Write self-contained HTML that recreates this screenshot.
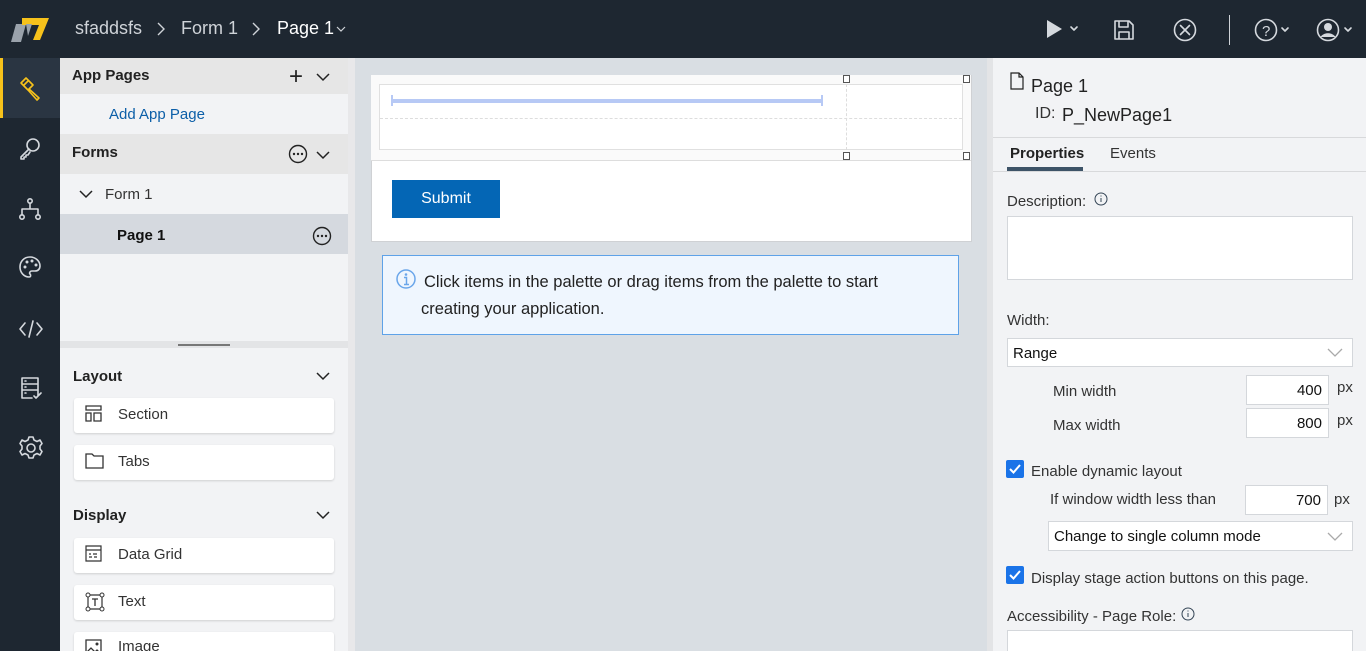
<!DOCTYPE html>
<html><head><meta charset="utf-8"><style>
*{box-sizing:border-box;margin:0;padding:0}
html,body{width:1366px;height:651px;overflow:hidden}
body{font-family:"Liberation Sans",Roboto,sans-serif;background:#d9dee3;color:#222}
#w{position:relative;width:1366px;height:651px;overflow:hidden}
.a{position:absolute}
.top{left:0;top:0;width:1366px;height:58px;background:#1e2731}
.rail{left:0;top:58px;width:60px;height:593px;background:#1e2731}
.ic{stroke:#d5d9de;fill:none;stroke-width:1.6;stroke-linecap:round;stroke-linejoin:round}
.lp{left:60px;top:58px;width:288px;height:593px;background:#f2f3f5}
.hd{background:#e6e6e6;font-weight:bold;font-size:15px;color:#222}
.card{left:74px;width:260px;height:35px;background:#fff;border-radius:3px;box-shadow:0 1px 2px rgba(0,0,0,.15);font-size:15px;color:#333}
.card span{position:absolute;left:44px;top:8px}
.card svg{position:absolute;left:11px;top:7px}
.rp{left:993px;top:58px;width:373px;height:593px;background:#f2f3f5;overflow:hidden}
.lbl{font-size:15px;color:#333}
.inp{background:#fff;border:1px solid #d4d7db}
.chk{width:18px;height:18px;background:#1a73e8;border-radius:2px}
</style></head><body><div id="w">
<div class="a top">
 <svg class="a" style="left:10px;top:16px" width="40" height="26"><polygon points="6,8 16,8 11,26 1,26" fill="#9aa2ab"/><polygon points="12,2 39,2 30,24 23,24 29,9 12,9" fill="#f7c21b"/><polygon points="16,8 22,8 18,20" fill="#9aa2ab"/></svg>
 <div class="a" style="left:75px;top:18px;font-size:18px;color:#cfd3d8">sfaddsfs</div>
 <svg class="a" style="left:156px;top:22px" width="10" height="14"><path d="M2 1l6 6-6 6" stroke="#cfd3d8" fill="none" stroke-width="1.4"/></svg>
 <div class="a" style="left:181px;top:18px;font-size:18px;color:#cfd3d8">Form 1</div>
 <svg class="a" style="left:251px;top:22px" width="10" height="14"><path d="M2 1l6 6-6 6" stroke="#cfd3d8" fill="none" stroke-width="1.4"/></svg>
 <div class="a" style="left:277px;top:18px;font-size:18px;color:#fff">Page 1</div>
 <svg class="a" style="left:336px;top:25px" width="10" height="8"><path d="M1 2l4 4 4-4" stroke="#cfd3d8" fill="none" stroke-width="1.2"/></svg>
 <svg class="a" style="left:1044px;top:18px" width="36" height="24"><polygon points="3,2 18,11 3,20" fill="#d5d9de"/><path class="ic" d="M27 9l3 3 3-3" stroke-width="1"/></svg>
 <svg class="a" style="left:1112px;top:18px" width="24" height="24"><path class="ic" d="M3 3h14l4 4v14H3z M7 3v6h9V3 M7 21v-7h10v7"/></svg>
 <svg class="a" style="left:1172px;top:17px" width="26" height="26"><circle class="ic" cx="13" cy="13" r="10.5"/><path class="ic" d="M8.5 8.5l9 9M17.5 8.5l-9 9"/></svg>
 <div class="a" style="left:1229px;top:15px;width:1px;height:30px;background:#cfd3d8"></div>
 <svg class="a" style="left:1254px;top:17px" width="40" height="26"><circle class="ic" cx="12" cy="13" r="10.5"/><text x="8" y="19" fill="#d5d9de" font-size="15" font-family="Liberation Sans">?</text><path class="ic" d="M28 11l3 3 3-3" stroke-width="1"/></svg>
 <svg class="a" style="left:1316px;top:17px" width="44" height="26"><circle class="ic" cx="12" cy="13" r="10.5"/><circle cx="12" cy="10" r="4" fill="#d5d9de"/><path d="M4.5 20c3-5 12-5 15 0" fill="#d5d9de"/><path class="ic" d="M29 11l3 3 3-3" stroke-width="1"/></svg>
</div>
<div class="a rail">
 <div class="a" style="left:0;top:0;width:60px;height:60px;background:#2a3542;border-left:3px solid #f7c21b"></div>
 <svg class="a" style="left:18px;top:18px" width="26" height="26"><path d="M3 7l5-5 7 7-5 5z M6 9l5-5 M11 13l10 9-2 2-9-10" stroke="#f7c21b" fill="none" stroke-width="1.6" stroke-linejoin="round"/></svg>
 <svg class="a" style="left:18px;top:78px" width="26" height="26"><circle class="ic" cx="15" cy="9" r="6"/><path class="ic" d="M11 13L3 21v2h3v-2h2v-2h2l2-3"/></svg>
 <svg class="a" style="left:18px;top:138px" width="26" height="26"><circle class="ic" cx="12" cy="5" r="2.2"/><circle class="ic" cx="4" cy="21" r="2.2"/><circle class="ic" cx="20" cy="21" r="2.2"/><path class="ic" d="M12 7v6M4 19v-6h16v6"/></svg>
 <svg class="a" style="left:18px;top:197px" width="26" height="26"><path class="ic" d="M12 2C6 2 2 6.5 2 12s4 10 9 10c2 0 2-2 1-3s0-3 2-3h3c3 0 5-2 5-5 0-5-4.5-9-10-9z"/><circle cx="7" cy="12" r="1.5" fill="#d5d9de"/><circle cx="9" cy="7" r="1.5" fill="#d5d9de"/><circle cx="14" cy="6" r="1.5" fill="#d5d9de"/><circle cx="18" cy="10" r="1.5" fill="#d5d9de"/></svg>
 <svg class="a" style="left:18px;top:258px" width="26" height="26"><path class="ic" d="M7 7l-5 6 5 6M19 7l5 6-5 6M15 5l-4 16"/></svg>
 <svg class="a" style="left:20px;top:318px" width="24" height="26"><path class="ic" d="M2 2h16v18M2 2v20h10M2 8h16M2 14h16M5 5h1M5 11h1M5 17h1M14 20l2 2 5-5"/></svg>
 <svg class="a" style="left:18px;top:377px" width="26" height="26"><circle class="ic" cx="13" cy="13" r="4"/><path class="ic" d="M11 2h4l1 3 3 1.5 3-1.5 2 3.5-2 2.5v3l2 2.5-2 3.5-3-1.5-3 1.5-1 3h-4l-1-3-3-1.5-3 1.5-2-3.5 2-2.5v-3l-2-2.5 2-3.5 3 1.5 3-1.5z"/></svg>
</div>
<div class="a lp">
 <div class="a hd" style="left:0;top:0;width:288px;height:36px;padding:9px 12px">App Pages</div>
 <div class="a" style="left:229px;top:5px;font-size:24px;color:#222">+</div>
 <svg class="a" style="left:256px;top:14px" width="14" height="10"><path d="M1 2l6 6 6-6" stroke="#222" fill="none" stroke-width="1.5"/></svg>
 <div class="a" style="left:49px;top:48px;font-size:15px;color:#0c5fa8">Add App Page</div>
 <div class="a hd" style="left:0;top:76px;width:288px;height:40px;padding:10px 12px">Forms</div>
 <svg class="a" style="left:228px;top:86px" width="20" height="20"><circle cx="10" cy="10" r="8.5" stroke="#222" fill="none" stroke-width="1.4"/><circle cx="6" cy="10" r="1.2" fill="#222"/><circle cx="10" cy="10" r="1.2" fill="#222"/><circle cx="14" cy="10" r="1.2" fill="#222"/></svg>
 <svg class="a" style="left:256px;top:92px" width="14" height="10"><path d="M1 2l6 6 6-6" stroke="#222" fill="none" stroke-width="1.5"/></svg>
 <svg class="a" style="left:19px;top:131px" width="14" height="10"><path d="M1 2l6 6 6-6" stroke="#222" fill="none" stroke-width="1.5"/></svg>
 <div class="a" style="left:45px;top:128px;font-size:15px;color:#333">Form 1</div>
 <div class="a" style="left:0;top:156px;width:288px;height:40px;background:#d5d9df"></div>
 <div class="a" style="left:57px;top:169px;font-size:15px;font-weight:bold;color:#111">Page 1</div>
 <svg class="a" style="left:252px;top:168px" width="20" height="20"><circle cx="10" cy="10" r="8.5" stroke="#222" fill="none" stroke-width="1.4"/><circle cx="6" cy="10" r="1.2" fill="#222"/><circle cx="10" cy="10" r="1.2" fill="#222"/><circle cx="14" cy="10" r="1.2" fill="#222"/></svg>
 <div class="a" style="left:0;top:283px;width:288px;height:7px;background:#e3e4e6"></div>
 <div class="a" style="left:118px;top:286px;width:52px;height:2px;background:#777"></div>
 <div class="a" style="left:13px;top:310px;font-size:15px;font-weight:bold">Layout</div>
 <svg class="a" style="left:256px;top:313px" width="14" height="10"><path d="M1 2l6 6 6-6" stroke="#222" fill="none" stroke-width="1.5"/></svg>
 <div class="a" style="left:13px;top:449px;font-size:15px;font-weight:bold">Display</div>
 <svg class="a" style="left:256px;top:452px" width="14" height="10"><path d="M1 2l6 6 6-6" stroke="#222" fill="none" stroke-width="1.5"/></svg>
</div>
<div class="a card" style="top:398px"><svg width="18" height="18"><path d="M1 1h15v4H1zM1 8h5v8H1zM9 8h7v8H9z" stroke="#333" fill="none" stroke-width="1.3"/></svg><span>Section</span></div>
<div class="a card" style="top:445px"><svg width="20" height="18"><path d="M1 2h6l2 2h9v12H1z" stroke="#333" fill="none" stroke-width="1.3"/></svg><span>Tabs</span></div>
<div class="a card" style="top:538px"><svg width="18" height="18"><path d="M1 1h15v15H1zM1 5h15M4 9h2M8 9h4M4 12h3M9 12h3" stroke="#333" fill="none" stroke-width="1.2"/></svg><span>Data Grid</span></div>
<div class="a card" style="top:585px"><svg width="20" height="20"><path d="M3 3h14v14H3z" stroke="#333" fill="none" stroke-width="1.2"/><circle cx="3" cy="3" r="2" fill="#fff" stroke="#333"/><circle cx="17" cy="3" r="2" fill="#fff" stroke="#333"/><circle cx="3" cy="17" r="2" fill="#fff" stroke="#333"/><circle cx="17" cy="17" r="2" fill="#fff" stroke="#333"/><path d="M7 7h6M10 7v7" stroke="#333" stroke-width="1.3"/></svg><span>Text</span></div>
<div class="a card" style="top:632px"><svg width="18" height="18"><path d="M1 1h15v15H1zM1 14l5-5 4 4 2-2 4 4" stroke="#333" fill="none" stroke-width="1.3"/><circle cx="12" cy="5" r="1.5" fill="#333"/></svg><span style="top:6px">Image</span></div>
<div class="a" style="left:348px;top:58px;width:7px;height:593px;background:#e8e8ea"></div>
<!-- canvas -->
<div class="a" style="left:371px;top:75px;width:601px;height:167px;background:#fff;border:1px solid #cfd1d4"></div>
<div class="a" style="left:371px;top:75px;width:600px;height:86px;background:#fafafa;border-bottom:1px solid #ddd"></div>
<div class="a" style="left:379px;top:84px;width:584px;height:66px;background:#fff;border:1px solid #e0e0e0"></div>
<div class="a" style="left:380px;top:118px;width:582px;border-top:1px dashed #ddd"></div>
<div class="a" style="left:846px;top:84px;height:66px;border-left:1px dashed #ddd"></div>
<div class="a" style="left:392px;top:99px;width:431px;height:4px;background:#b7c9f5"></div>
<div class="a" style="left:391px;top:95px;width:2px;height:11px;background:#b7c9f5"></div>
<div class="a" style="left:821px;top:95px;width:2px;height:11px;background:#b7c9f5"></div>
<div class="a" style="left:843px;top:75px;width:7px;height:8px;border:1px solid #555;background:#fff"></div>
<div class="a" style="left:963px;top:75px;width:7px;height:8px;border:1px solid #555;background:#fff"></div>
<div class="a" style="left:843px;top:152px;width:7px;height:8px;border:1px solid #555;background:#fff"></div>
<div class="a" style="left:963px;top:152px;width:7px;height:8px;border:1px solid #555;background:#fff"></div>
<div class="a" style="left:392px;top:180px;width:108px;height:38px;background:#0466b5;color:#fff;font-size:16px;text-align:center;line-height:38px">Submit</div>
<div class="a" style="left:382px;top:255px;width:577px;height:80px;background:#eff6fe;border:1px solid #5ea2e8"></div>
<svg class="a" style="left:395px;top:268px" width="22" height="22"><circle cx="11" cy="11" r="9" stroke="#6aa6ea" fill="none" stroke-width="1.5"/><circle cx="11" cy="6.5" r="1.3" fill="#6aa6ea"/><path d="M9 9.5h2.5v7M9 16.5h5" stroke="#6aa6ea" stroke-width="1.5" fill="none"/></svg>
<div class="a" style="left:424px;top:273px;font-size:16.5px;color:#222">Click items in the palette or drag items from the palette to start</div>
<div class="a" style="left:421px;top:300px;font-size:16.5px;color:#222">creating your application.</div>
<div class="a" style="left:987px;top:58px;width:6px;height:593px;background:#e3e4e6"></div>
<!-- right panel -->
<div class="a rp">
 <svg class="a" style="left:17px;top:14px" width="14" height="18"><path d="M1 1h8l4 4v12H1z M9 1v4h4" stroke="#222" fill="none" stroke-width="1.2"/></svg>
 <div class="a" style="left:38px;top:18px;font-size:18px;color:#222">Page 1</div>
 <div class="a" style="left:42px;top:47px;font-size:16px;color:#333">ID:</div>
 <div class="a" style="left:69px;top:47px;font-size:18px;color:#222">P_NewPage1</div>
 <div class="a" style="left:0;top:79px;width:373px;height:1px;background:#d8d9db"></div>
 <div class="a" style="left:17px;top:87px;font-size:15px;font-weight:bold;color:#222">Properties</div>
 <div class="a" style="left:14px;top:109px;width:76px;height:4px;background:#3d5367"></div>
 <div class="a" style="left:117px;top:87px;font-size:15px;color:#333">Events</div>
 <div class="a" style="left:0;top:113px;width:373px;height:1px;background:#d8d9db"></div>
 <div class="a lbl" style="left:14px;top:135px">Description:</div>
 <svg class="a" style="left:101px;top:134px" width="14" height="14"><circle cx="7" cy="7" r="6" stroke="#345" fill="none"/><path d="M7 6v4M7 3.5v1" stroke="#345"/></svg>
 <div class="a inp" style="left:14px;top:158px;width:346px;height:64px"></div>
 <div class="a lbl" style="left:14px;top:254px">Width:</div>
 <div class="a inp" style="left:14px;top:280px;width:346px;height:29px;font-size:15px;padding:6px 5px;color:#111">Range</div>
 <svg class="a" style="left:334px;top:290px" width="16" height="10"><path d="M1 1l7 7 7-7" stroke="#aaa" fill="none" stroke-width="1.3"/></svg>
 <div class="a lbl" style="left:60px;top:325px">Min width</div>
 <div class="a inp" style="left:253px;top:317px;width:83px;height:30px;font-size:15px;text-align:right;padding:6px 6px;color:#111">400</div>
 <div class="a lbl" style="left:344px;top:321px">px</div>
 <div class="a lbl" style="left:60px;top:359px">Max width</div>
 <div class="a inp" style="left:253px;top:350px;width:83px;height:30px;font-size:15px;text-align:right;padding:6px 6px;color:#111">800</div>
 <div class="a lbl" style="left:344px;top:354px">px</div>
 <div class="a chk" style="left:13px;top:402px"></div>
 <svg class="a" style="left:13px;top:402px" width="18" height="18"><path d="M4 9l3.5 3.5L14 5" stroke="#fff" fill="none" stroke-width="2"/></svg>
 <div class="a lbl" style="left:38px;top:405px">Enable dynamic layout</div>
 <div class="a lbl" style="left:57px;top:433px">If window width less than</div>
 <div class="a inp" style="left:252px;top:427px;width:83px;height:30px;font-size:15px;text-align:right;padding:6px 6px;color:#111">700</div>
 <div class="a lbl" style="left:341px;top:433px">px</div>
 <div class="a inp" style="left:55px;top:463px;width:305px;height:30px;font-size:15px;padding:6px 5px;color:#111">Change to single column mode</div>
 <svg class="a" style="left:334px;top:474px" width="16" height="10"><path d="M1 1l7 7 7-7" stroke="#aaa" fill="none" stroke-width="1.3"/></svg>
 <div class="a chk" style="left:13px;top:508px"></div>
 <svg class="a" style="left:13px;top:508px" width="18" height="18"><path d="M4 9l3.5 3.5L14 5" stroke="#fff" fill="none" stroke-width="2"/></svg>
 <div class="a lbl" style="left:38px;top:512px">Display stage action buttons on this page.</div>
 <div class="a lbl" style="left:14px;top:550px">Accessibility - Page Role:</div>
 <svg class="a" style="left:188px;top:549px" width="14" height="14"><circle cx="7" cy="7" r="6" stroke="#345" fill="none"/><path d="M7 6v4M7 3.5v1" stroke="#345"/></svg>
 <div class="a inp" style="left:14px;top:572px;width:346px;height:30px"></div>
</div>
</div></body></html>
